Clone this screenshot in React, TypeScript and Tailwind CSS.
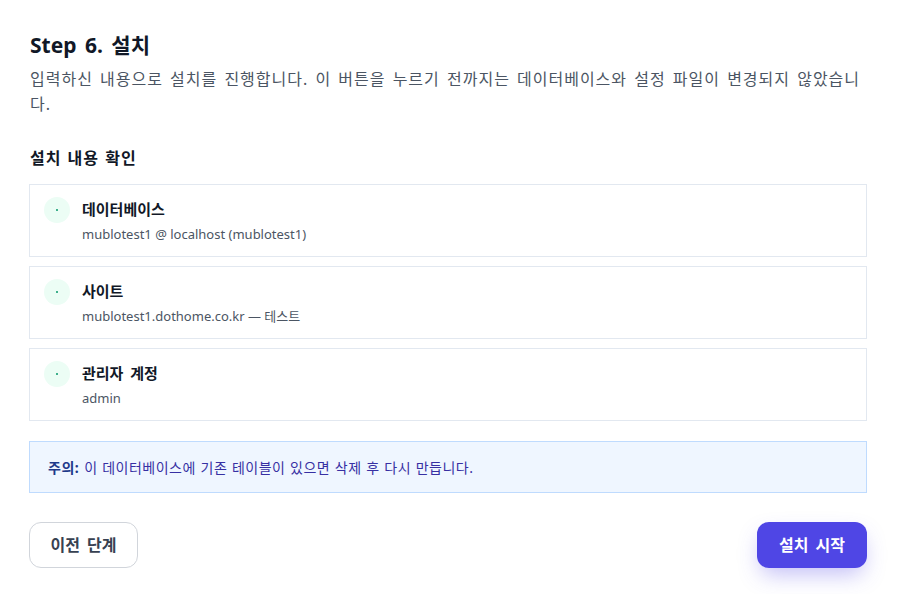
const items = [
  { title: "데이터베이스", desc: "mublotest1 @ localhost (mublotest1)" },
  { title: "사이트", desc: "mublotest1.dothome.co.kr — 테스트" },
  { title: "관리자 계정", desc: "admin" },
];

export default function App() {
  return (
    <div className="w-[898px] h-[594px] bg-white pl-[29px] pr-[31px] pt-[30px]"
      style={{ fontFamily: '"Noto Sans", "Noto Sans CJK KR", sans-serif' }}>
      {/* Header */}
      <h2 className="pl-px text-[21px] font-bold leading-[30px] text-[#111827] [word-spacing:3px]">Step 6. 설치</h2>
      <p className="pl-px mt-[7px] text-[16px] leading-[25px] text-[#4b5563] tracking-[1px] [word-spacing:2px]">
        입력하신 내용으로 설치를 진행합니다. 이 버튼을 누르기 전까지는 데이터베이스와 설정 파일이 변경되지 않았습니다.
      </p>

      {/* Summary */}
      <h3 className="pl-px mt-[30px] text-[16px] font-semibold leading-[22px] text-[#111827] tracking-[1px] [word-spacing:1px]">설치 내용 확인</h3>
      <div className="mt-[15px] flex flex-col gap-[9px]">
        {items.map(it => (
          <div key={it.title} className="flex gap-[12px] h-[73px] border border-[#e2e8f0] px-[14px] pt-[12px]">
            <div className="w-[26px] h-[26px] rounded-full bg-[#ecfdf5] flex items-center justify-center shrink-0">
              <span className="w-[2px] h-[2px] rounded-full bg-[#059669]" />
            </div>
            <div className="flex flex-col">
              <span className="text-[15px] font-semibold leading-[24px] text-[#111827] [word-spacing:3px]">{it.title}</span>
              <span className="mt-[3px] text-[13px] leading-[20px] text-[#4b5563]">{it.desc}</span>
            </div>
          </div>
        ))}
      </div>

      {/* Notice */}
      <div className="mt-[20px] h-[52px] border border-[#bfdbfe] bg-[#eff6ff] px-[18px] flex items-center text-[14px] text-[#3730a3] tracking-[0.5px] [word-spacing:0.5px]">
        <span className="font-bold text-[#1e3a8a]">주의:</span>
        <span className="ml-[5px]">이 데이터베이스에 기존 테이블이 있으면 삭제 후 다시 만듭니다.</span>
      </div>

      {/* Actions */}
      <div className="mt-[29px] flex items-center justify-between">
        <button className="w-[109px] h-[46px] rounded-[12px] border border-[#d1d5db] bg-white text-[16px] font-semibold text-[#374151] [word-spacing:3px]">
          이전 단계
        </button>
        <button className="w-[110px] h-[46px] rounded-[12px] bg-[#4f46e5] text-[16px] font-semibold text-white [word-spacing:3px] shadow-[0_10px_22px_-4px_rgba(79,70,229,0.35)]">
          설치 시작
        </button>
      </div>
    </div>
  );
}
